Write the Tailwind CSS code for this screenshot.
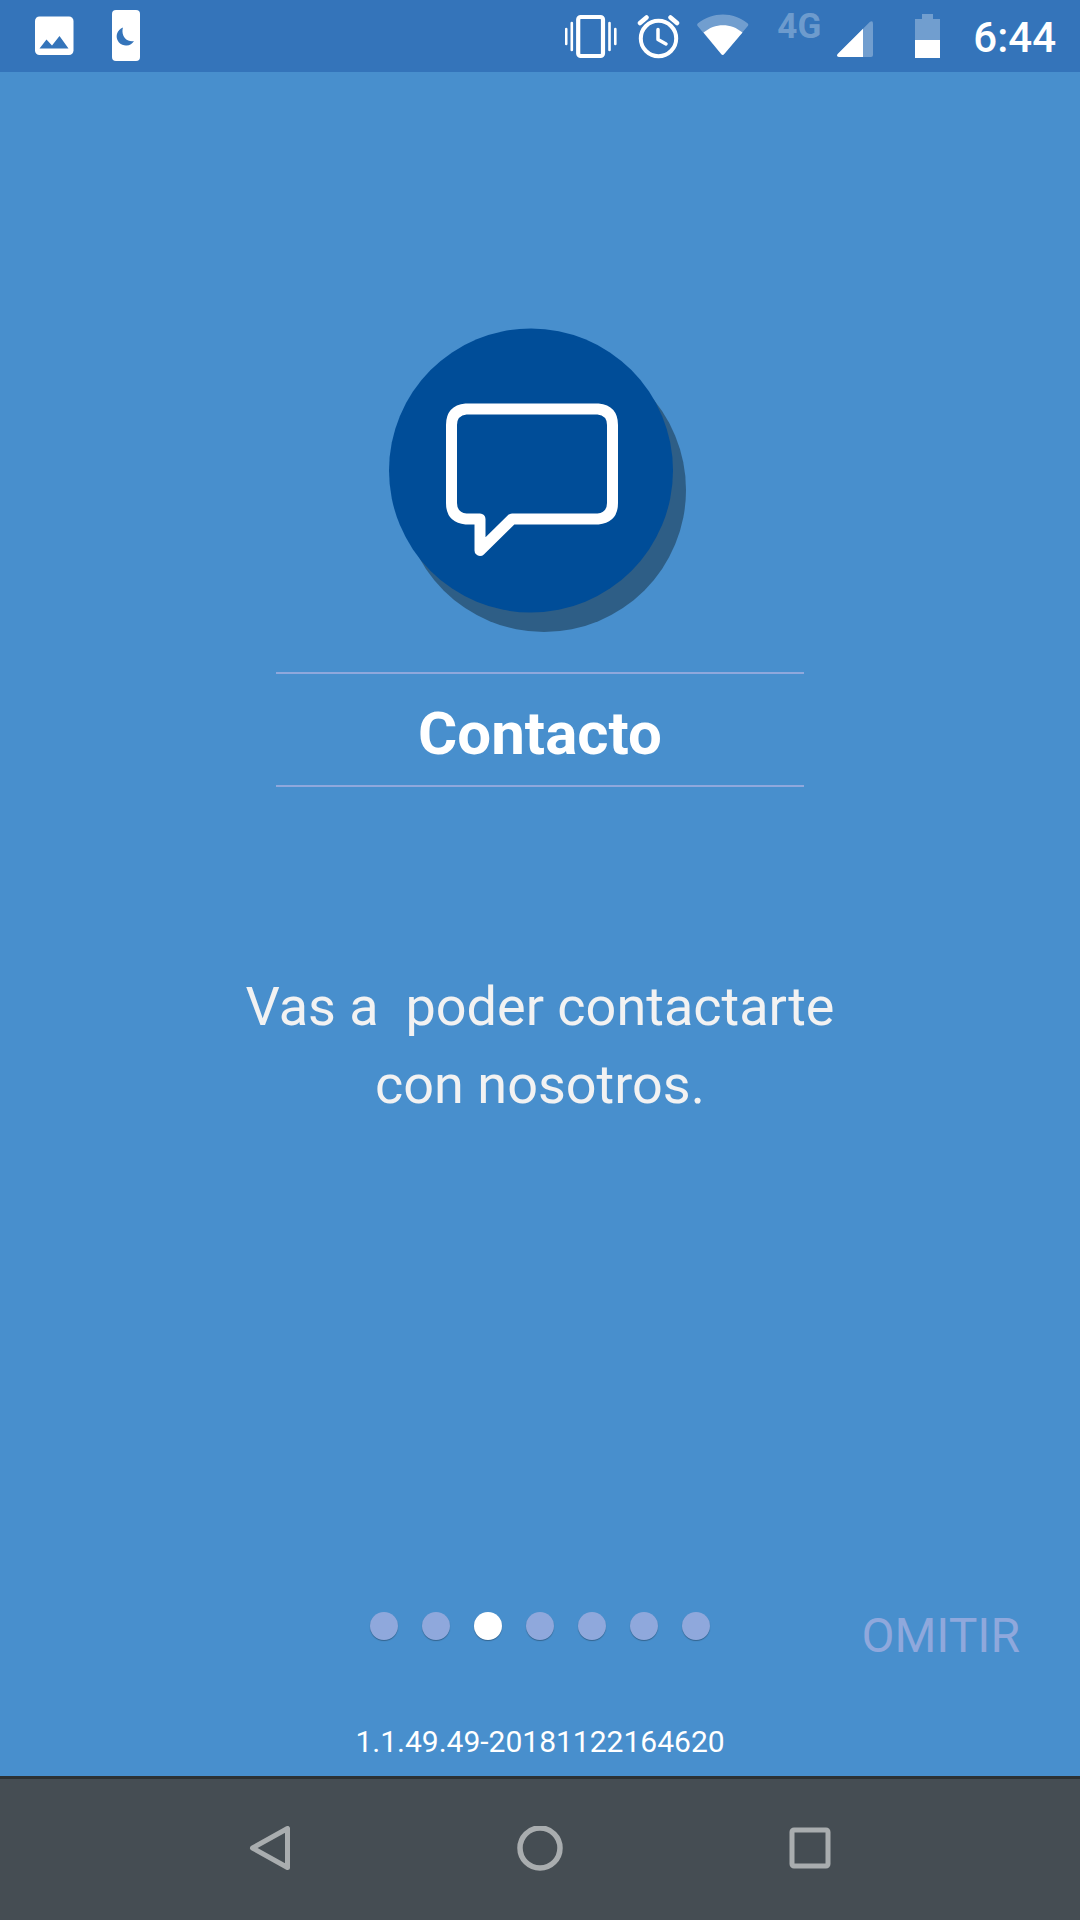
<!DOCTYPE html>
<html lang="es">
<head>
  <meta charset="UTF-8" />
  <meta name="viewport" content="width=device-width, initial-scale=1.0" />
  <title>Contacto</title>
  <script src="https://cdn.jsdelivr.net/npm/@tailwindcss/browser@4"></script>
</head>
<body class="min-h-screen flex flex-col bg-[#488fcd] font-[Roboto,sans-serif] text-white">

  <!-- Status Bar -->
  <header class="h-18 flex justify-between bg-[#3474ba] pl-8 pr-6">
    <div class="flex gap-9">
      <svg class="w-11 h-18" viewBox="0 0 44 72" aria-hidden="true">
        <rect x="3" y="16.5" width="38.5" height="38.5" rx="4.5" fill="#fff" />
        <path d="M7.5 48.5 14.5 39.5 20 45.5 27.5 36 36.5 48.5Z" fill="#3474ba" />
      </svg>
      <svg class="w-7 h-18" viewBox="0 0 28 72" aria-hidden="true">
        <rect x="0" y="10" width="28" height="51" rx="4" fill="#fff" />
        <path d="M11 27.5A9.3 9.3 0 1 0 22 41C15 42.5 8.5 36 11 27.5Z" fill="#3474ba" />
      </svg>
    </div>

    <div class="flex">
      <svg class="w-13 h-18" viewBox="0 0 52 72" fill="none" stroke="#fff" aria-hidden="true">
        <rect x="13.2" y="17" width="24.8" height="39" rx="2.5" stroke-width="4.2" />
        <path d="M1.2 29V44M6.8 23V50M44.5 23V50M50.3 29V44" stroke-width="2.6" stroke-linecap="round" />
      </svg>
      <svg class="ml-5 w-11 h-18" viewBox="0 0 44 72" fill="none" stroke="#fff" stroke-linecap="round" aria-hidden="true">
        <circle cx="21.5" cy="38.5" r="17.7" stroke-width="4" />
        <path d="M21 29.5V39.5L29 44" stroke-width="3.5" stroke-linejoin="round" />
        <path d="M3 23 9.5 17.5M40 23 33.5 17.5" stroke-width="4.5" />
      </svg>
      <svg class="ml-4 w-13 h-18" viewBox="0 0 52 72" aria-hidden="true">
        <path d="M.6 26Q-.5 24.5 1 23.3C15.5 11.7 36.5 11.7 50.5 23.3Q52 24.5 50.8 26L27 54.3Q25.7 55.7 24.4 54.3Z" fill="#fff" fill-opacity=".3" />
        <path d="M6.5 32.5C18 22.7 34 22.7 45.5 32.5L27 54.3Q25.7 55.7 24.4 54.3Z" fill="#fff" />
      </svg>
      <span class="ml-7 pt-2 text-[35px] leading-[38px] font-bold text-white/30">4G</span>
      <svg class="ml-4 w-9 h-18" viewBox="0 0 36 72" aria-hidden="true">
        <path d="M.7 54 33 21.7Q36 20 36 23.5V55Q36 57 34 57H2Q-1 56.5 .7 54Z" fill="#fff" fill-opacity=".3" />
        <path d="M.7 54 26 28.7V57H2Q-1 56.5 .7 54Z" fill="#fff" />
      </svg>
      <svg class="ml-10 w-7 h-18" viewBox="0 0 28 72" aria-hidden="true">
        <path d="M2 19H9V14H20V19H27V40H2Z" fill="#fff" fill-opacity=".3" />
        <path d="M2 40H27V58H2Z" fill="#fff" />
      </svg>
      <time class="ml-8 pt-0.5 text-[42px] leading-[72px] font-medium">6:44</time>
    </div>
  </header>

  <!-- Slide -->
  <main class="flex-1 flex flex-col items-center pt-64">
    <svg class="w-[302px] h-[304px]" viewBox="0 0 302 304" aria-hidden="true">
      <circle cx="155" cy="162" r="142" fill="#2e5e86" />
      <circle cx="142" cy="142.5" r="142" fill="#004d98" />
      <path d="M79 81H209Q223.5 82.500 223.5 97V175Q223.5 189.500 209 191H123L91 222.5V191H77Q62.500 189.500 62.500 175V97Q62.500 82.500 77 81Z"
            fill="none" stroke="#fff" stroke-width="11" stroke-linejoin="round" />
    </svg>

    <h1 class="mt-10 w-[528px] max-w-full border-y-2 border-[#8fa8dc] pt-6 pb-4 text-center text-[60px] leading-[71px] font-bold">Contacto</h1>

    <p class="mt-[181px] max-w-[600px] text-center text-[54px] leading-[78px] text-[#f2f2f2]">Vas a&nbsp; poder contactarte con nosotros.</p>
  </main>

  <!-- Pager -->
  <footer class="text-[#8fa8dc]">
    <div class="grid grid-cols-[1fr_auto_1fr] items-start">
      <nav class="col-start-2 flex gap-6" aria-label="Páginas">
        <button class="size-7 rounded-full bg-[#8fa8dc] shadow-[0_1px_1px_#0000004d]" aria-label="1"></button>
        <button class="size-7 rounded-full bg-[#8fa8dc] shadow-[0_1px_1px_#0000004d]" aria-label="2"></button>
        <button class="size-7 rounded-full bg-white shadow-[0_1px_1px_#0000004d]" aria-label="3" aria-current="true"></button>
        <button class="size-7 rounded-full bg-[#8fa8dc] shadow-[0_1px_1px_#0000004d]" aria-label="4"></button>
        <button class="size-7 rounded-full bg-[#8fa8dc] shadow-[0_1px_1px_#0000004d]" aria-label="5"></button>
        <button class="size-7 rounded-full bg-[#8fa8dc] shadow-[0_1px_1px_#0000004d]" aria-label="6"></button>
        <button class="size-7 rounded-full bg-[#8fa8dc] shadow-[0_1px_1px_#0000004d]" aria-label="7"></button>
      </nav>
      <button class="mr-15 justify-self-end text-5xl leading-12">OMITIR</button>
    </div>
    <p class="mt-16 pb-4 text-center text-3xl leading-9 text-white">1.1.49.49-20181122164620</p>
  </footer>

  <!-- Navigation Bar -->
  <nav class="h-36 grid grid-cols-3 border-t-3 border-[#2c3133] bg-[#454d53] px-[12.5%]" aria-label="Sistema">
    <button class="flex items-center justify-center" aria-label="Atrás">
      <svg class="size-12" viewBox="0 0 48 48" fill="none" stroke="#a9adaf" stroke-width="5" stroke-linejoin="round">
        <path d="M41.5 2.500V41.500L6.500 22Z" />
      </svg>
    </button>
    <button class="flex items-center justify-center" aria-label="Inicio">
      <svg class="size-12" viewBox="0 0 48 48" fill="none" stroke="#a9adaf" stroke-width="5.5">
        <circle cx="24" cy="22" r="20" />
      </svg>
    </button>
    <button class="flex items-center justify-center" aria-label="Recientes">
      <svg class="size-12" viewBox="0 0 48 48" fill="none" stroke="#a9adaf" stroke-width="5">
        <rect x="6" y="4" width="36" height="36" rx="2" />
      </svg>
    </button>
  </nav>

</body>
</html>
